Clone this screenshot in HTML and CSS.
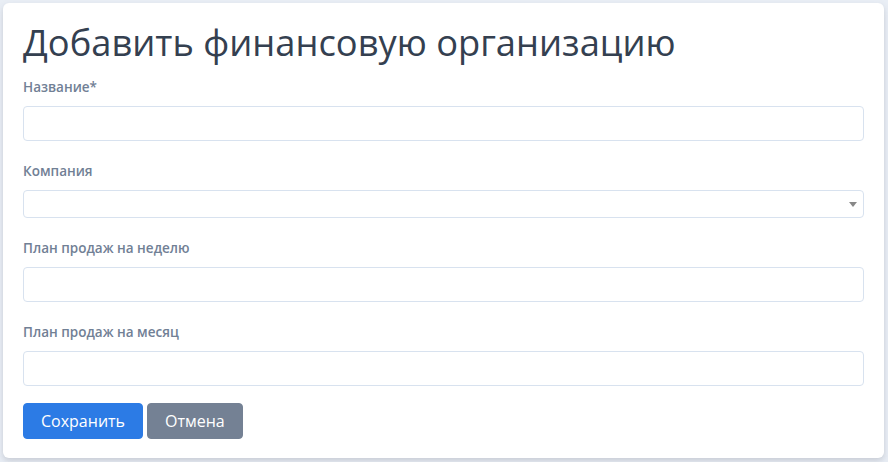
FILE: index.html
```html
<!DOCTYPE html>
<html lang="ru">
<head>
    <meta charset="UTF-8">
    <meta name="viewport" content="width=device-width, initial-scale=1.0">
    <title>Добавить финансовую организацию</title>
    <link rel="stylesheet" href="styles.css">
</head>
<body>

    <div class="card">
        <h1 class="card-title">Добавить финансовую организацию</h1>

        <form class="org-form">
            <div class="form-group">
                <label class="form-label" for="name">Название*</label>
                <input class="form-control" id="name" type="text">
            </div>

            <div class="form-group">
                <label class="form-label" for="company">Компания</label>
                <div class="select-wrap">
                    <select class="form-select" id="company">
                        <option></option>
                    </select>
                    <span class="select-arrow"></span>
                </div>
            </div>

            <div class="form-group">
                <label class="form-label" for="week-plan">План продаж на неделю</label>
                <input class="form-control" id="week-plan" type="text">
            </div>

            <div class="form-group last">
                <label class="form-label" for="month-plan">План продаж на месяц</label>
                <input class="form-control" id="month-plan" type="text">
            </div>

            <div class="form-actions">
                <button class="btn btn-primary" type="submit">Сохранить</button>
                <button class="btn btn-secondary" type="button">Отмена</button>
            </div>
        </form>
    </div>

</body>
</html>
```

FILE: styles.css
```css
body {
    margin: 0;
    padding: 3px 4px 4px 3px;
    background-color: #e9eef5;
    font-family: 'Open Sans', 'Noto Sans', sans-serif;
    color: #344050;
}

.card {
    background: #fff;
    border-radius: 6px;
    padding: 18px 20px 19px 20px;
    box-shadow: 0 4px 8px 0 rgba(65, 69, 88, 0.12), 0 2px 4px 0 rgba(0, 0, 0, 0.06);
}

.card-title {
    margin: 0 0 13px 0;
    font-size: 36.3px;
    font-weight: 400;
    line-height: 43px;
    color: #344050;
}

.form-group {
    margin-bottom: 20px;
}

.form-group.last {
    margin-bottom: 17px;
}

.form-label {
    display: block;
    margin-bottom: 9px;
    font-size: 13.5px;
    font-weight: 600;
    line-height: 20px;
    color: #718095;
}

.form-control,
.form-select {
    display: block;
    box-sizing: border-box;
    width: 100%;
    height: 35px;
    margin: 0;
    padding: 6px 12px;
    border: 1px solid #d8e2ef;
    border-radius: 4px;
    background: #fff;
    font-family: inherit;
    font-size: 14px;
    color: #344050;
    outline: none;
}

.select-wrap {
    position: relative;
}

.form-select {
    height: 28px;
    padding: 2px 8px;
    -webkit-appearance: none;
    appearance: none;
}

.select-arrow {
    position: absolute;
    right: 7px;
    top: 12px;
    width: 0;
    height: 0;
    border-left: 4px solid transparent;
    border-right: 4px solid transparent;
    border-top: 5px solid #888;
}

.form-actions {
    display: flex;
    gap: 4px;
}

.btn {
    height: 36px;
    padding: 0 17px;
    border: 1px solid transparent;
    border-radius: 4px;
    font-family: inherit;
    font-size: 16px;
    line-height: 1;
    color: #fff;
    cursor: pointer;
}

.btn-primary {
    background-color: #2c7be5;
    border-color: #2c7be5;
}

.btn-secondary {
    background-color: #748194;
    border-color: #748194;
}
```
